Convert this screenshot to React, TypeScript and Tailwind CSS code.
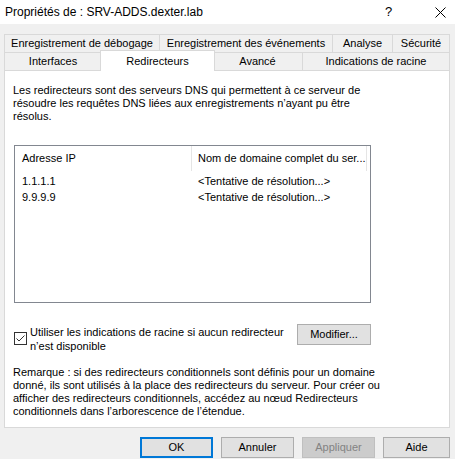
import React from "react";

const font = { fontFamily: '"Liberation Sans", Arial, sans-serif' };

function Tab({ label, w, first }: { label: string; w: number; first?: boolean }) {
  return (
    <div
      className={`h-full flex items-center justify-center border-t border-r border-[#d9d9d9] bg-[#f0f0f0] text-[11px] text-black ${first ? "border-l" : ""}`}
      style={{ width: w }}
    >
      {label}
    </div>
  );
}

function Btn({ label, w, primary, disabled }: { label: string; w: number; primary?: boolean; disabled?: boolean }) {
  return (
    <div
      className={`h-[21px] flex items-center justify-center text-[11px] ${
        primary
          ? "border-2 border-[#0078d7] bg-[#e1e1e1] text-black"
          : disabled
          ? "border border-[#bfbfbf] bg-[#cccccc] text-[#838383]"
          : "border border-[#adadad] bg-[#e1e1e1] text-black"
      }`}
      style={{ width: w }}
    >
      {label}
    </div>
  );
}

export default function App() {
  return (
    <div className="w-[455px] h-[459px] bg-[#f0f0f0] flex flex-col overflow-hidden" style={font}>
      {/* title bar */}
      <div className="h-[24px] bg-white flex items-center pl-[5px] text-[12px] text-black shrink-0">
        <span className="flex-1">Propriétés de : SRV-ADDS.dexter.lab</span>
        <span className="w-[10px] text-[13px] mr-[40px]">?</span>
        <svg width="11" height="11" viewBox="0 0 11 11" className="mr-[9px]">
          <path d="M0.5 0.5 L10.5 10.5 M10.5 0.5 L0.5 10.5" stroke="#000" strokeWidth="1" />
        </svg>
      </div>

      {/* tabs */}
      <div className="mt-[10px] px-[4px] flex flex-col shrink-0">
        <div className="h-[18px] flex">
          <Tab label="Enregistrement de débogage" w={156} first />
          <Tab label="Enregistrement des événements" w={173} />
          <Tab label="Analyse" w={60} />
          <Tab label="Sécurité" w={57} />
        </div>
        <div className="h-[18px] flex">
          <Tab label="Interfaces" w={98} first />
          <div className="relative z-10 -mt-[2px] -mx-[2px] h-[21px] w-[115px] bg-white border-t border-l border-r border-[#d9d9d9] flex justify-center pt-[2px] text-[11px] text-black">
            Redirecteurs
          </div>
          <Tab label="Avancé" w={90} />
          <Tab label="Indications de racine" w={147} />
        </div>
      </div>

      {/* panel */}
      <div className="mx-[4px] w-[446px] h-[358px] bg-white border border-[#d9d9d9] flex flex-col pl-[8px] pt-[13px] text-[11px] leading-[13px] text-black shrink-0">
        <p className="w-[360px]">
          Les redirecteurs sont des serveurs DNS qui permettent à ce serveur de résoudre les requêtes DNS liées aux
          enregistrements n’ayant pu être résolus.
        </p>

        <div className="mt-[22px] ml-[1px] w-[357px] h-[158px] border border-[#828790] flex flex-col">
          <div className="h-[25px] flex">
            <div className="w-[177px] h-full flex items-center pl-[7px] border-r border-[#e5e5e5]">Adresse IP</div>
            <div className="w-[175px] h-full flex items-center pl-[6px] border-r border-[#e5e5e5] whitespace-nowrap">
              Nom de domaine complet du ser...
            </div>
          </div>
          <div className="mt-[2px] flex flex-col">
            {["1.1.1.1", "9.9.9.9"].map((ip) => (
              <div key={ip} className="h-[16px] flex items-center">
                <div className="w-[177px] pl-[7px]">{ip}</div>
                <div className="pl-[6px]">&lt;Tentative de résolution...&gt;</div>
              </div>
            ))}
          </div>
        </div>

        <div className="mt-[22px] ml-[1px] flex w-[357px]">
          <div className="flex items-start">
            <div className="mt-[7px] w-[13px] h-[13px] border border-[#333333] bg-white flex items-center justify-center shrink-0">
              <svg width="11" height="11" viewBox="0 0 11 11">
                <path d="M1.5 5.5 L4 8 L9.5 2.5" stroke="#333" strokeWidth="1" fill="none" />
              </svg>
            </div>
            <div className="ml-[3px] leading-[14px] whitespace-nowrap">
              Utiliser les indications de racine si aucun redirecteur
              <br />
              n’est disponible
            </div>
          </div>
          <div className="flex-1" />
          <div className="mt-[-1px] w-[74px] h-[21px] border border-[#adadad] bg-[#e1e1e1] flex items-center justify-center">
            Modifier...
          </div>
        </div>

        <p className="mt-[13px] w-[380px]">
          Remarque : si des redirecteurs conditionnels sont définis pour un domaine donné, ils sont utilisés à la place
          des redirecteurs du serveur. Pour créer ou afficher des redirecteurs conditionnels, accédez au nœud
          Redirecteurs conditionnels dans l’arborescence de l’étendue.
        </p>
      </div>

      {/* buttons */}
      <div className="mt-[9px] pl-[140px] flex gap-[8px] shrink-0">
        <Btn label="OK" w={73} primary />
        <Btn label="Annuler" w={73} />
        <Btn label="Appliquer" w={73} disabled />
        <Btn label="Aide" w={67} />
      </div>
    </div>
  );
}
